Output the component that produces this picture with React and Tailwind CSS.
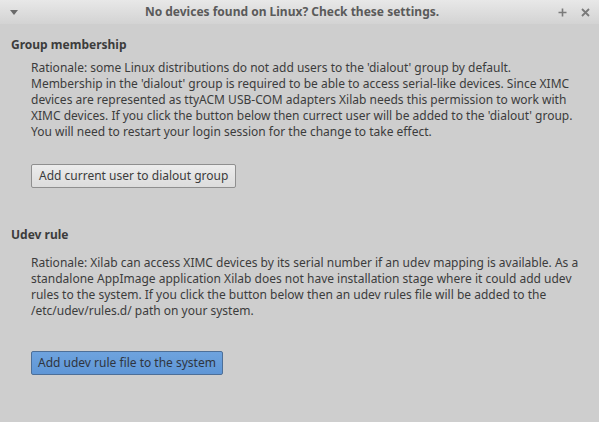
import React from "react";

export default function App() {
  return (
    <div className="w-[599px] h-[422px] bg-[#cecece] flex flex-col text-[#3c3c3c] overflow-hidden" style={{ fontFamily: '"Noto Sans", "Open Sans", sans-serif' }}>
      <div className="h-[24px] shrink-0 flex items-center bg-gradient-to-b from-[#e8e8e8] to-[#d3d3d3] relative">
        <div className="w-[26px] flex justify-center">
          <svg width="8" height="5" viewBox="0 0 8 5" className="ml-[1px]"><path d="M0 0 L8 0 L4 5 Z" fill="#6a6a6a" /></svg>
        </div>
        <div className="flex-1 text-center text-[12px] font-bold text-[#5a5a5a] leading-none">No devices found on Linux? Check these settings.</div>
        <div className="flex items-center gap-[14px] pr-[9px]">
          <svg width="9" height="9" viewBox="0 0 9 9"><path d="M4.5 0.5 V8.5 M0.5 4.5 H8.5" stroke="#7a7a7a" strokeWidth="1.6" /></svg>
          <svg width="9" height="9" viewBox="0 0 9 9"><path d="M1 1 L8 8 M8 1 L1 8" stroke="#7a7a7a" strokeWidth="1.8" /></svg>
        </div>
      </div>
      <div className="flex flex-col pl-[11px] pt-[12px]">
        <div className="text-[12px] font-bold leading-[18px]">Group membership</div>
        <div className="pl-[20px] pt-[6px] text-[12px] leading-[16px] whitespace-nowrap">
          Rationale: some Linux distributions do not add users to the 'dialout' group by default.<br />
          Membership in the 'dialout' group is required to be able to access serial-like devices. Since XIMC<br />
          devices are represented as ttyACM USB-COM adapters Xilab needs this permission to work with<br />
          XIMC devices. If you click the button below then currect user will be added to the 'dialout' group.<br />
          You will need to restart your login session for the change to take effect.
        </div>
        <div className="pl-[20px] pt-[22px]">
          <button className="h-[24px] px-[7px] text-[12px] leading-none rounded-[2px] border border-[#8f8f8f] bg-gradient-to-b from-[#ececec] to-[#dcdcdc] text-[#3c3c3c]">Add current user to dialout group</button>
        </div>
        <div className="text-[12px] font-bold leading-[18px] mt-[38px]">Udev rule</div>
        <div className="pl-[20px] pt-[11px] text-[12px] leading-[16px] whitespace-nowrap">
          Rationale: Xilab can access XIMC devices by its serial number if an udev mapping is available. As a<br />
          standalone AppImage application Xilab does not have installation stage where it could add udev<br />
          rules to the system. If you click the button below then an udev rules file will be added to the<br />
          /etc/udev/rules.d/ path on your system.
        </div>
        <div className="pl-[20px] pt-[30px]">
          <button className="h-[24px] px-[6px] text-[12px] leading-none rounded-[2px] border border-[#4d6f98] bg-gradient-to-b from-[#6ea3de] to-[#5f96d6] text-[#2f3540]">Add udev rule file to the system</button>
        </div>
      </div>
    </div>
  );
}
